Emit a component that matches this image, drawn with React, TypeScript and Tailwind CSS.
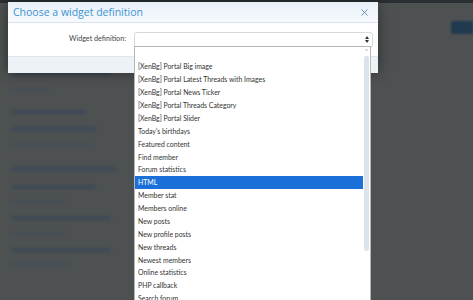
import { X } from "lucide-react";

const options = [
  "",
  "[XenBg] Portal Big image",
  "[XenBg] Portal Latest Threads with Images",
  "[XenBg] Portal News Ticker",
  "[XenBg] Portal Threads Category",
  "[XenBg] Portal Slider",
  "Today's birthdays",
  "Featured content",
  "Find member",
  "Forum statistics",
  "HTML",
  "Member stat",
  "Members online",
  "New posts",
  "New profile posts",
  "New threads",
  "Newest members",
  "Online statistics",
  "PHP callback",
  "Search forum",
];

// blurred page rows behind the overlay
const bgRows = [
  { w: "w-[100px]", mt: "mt-[8px]", bold: true },
  { w: "w-[40px]", mt: "mt-[12px]", bold: false },
  { w: "w-[75px]", mt: "mt-[18px]", bold: true },
  { w: "w-[85px]", mt: "mt-[13px]", bold: true },
  { w: "w-[80px]", mt: "mt-[12px]", bold: false },
  { w: "w-[105px]", mt: "mt-[20px]", bold: true },
  { w: "w-[85px]", mt: "mt-[14px]", bold: true },
  { w: "w-[55px]", mt: "mt-[11px]", bold: false },
  { w: "w-[100px]", mt: "mt-[12px]", bold: true },
  { w: "w-[55px]", mt: "mt-[12px]", bold: false },
  { w: "w-[100px]", mt: "mt-[12px]", bold: true },
  { w: "w-[60px]", mt: "mt-[10px]", bold: false },
];

export default function App() {
  return (
    <div
      className="relative w-[473px] h-[300px] overflow-hidden bg-[#4e5152]"
      style={{ fontFamily: '"Open Sans", "Noto Sans", sans-serif' }}
    >
      {/* page behind */}
      <div className="h-[3px] bg-[#2a2f33]" />
      <div className="flex justify-end pt-[18px]">
        <div className="w-[22px] h-[13px] bg-[#213a50] rounded-l-[2px] blur-[1px]" />
      </div>
      <div className="flex flex-col pl-[11px] pt-[30px] blur-[1.5px]">
        {bgRows.map((r, i) => (
          <div
            key={i}
            className={`${r.w} ${r.mt} h-[4px] rounded-sm ${r.bold ? "bg-[#3d4957]" : "bg-[#464e57]"}`}
          />
        ))}
      </div>

      {/* modal */}
      <div className="absolute left-[8px] top-[2px] w-[370px] shadow-[0_0_12px_rgba(0,0,0,0.45)]">
        <div className="flex items-center justify-between h-[21px] pl-[5px] pr-[8px] bg-gradient-to-b from-[#e8f0f8] to-[#f7fafd] border-b border-[#dbe4ee]">
          <span className="text-[10.5px] text-[#3c93d3] leading-none">
            Choose a widget definition
          </span>
          <X size={11} strokeWidth={2} className="text-[#5b8ab5]" />
        </div>
        <div className="flex items-center bg-white h-[33px]">
          <div className="w-[118px] text-right text-[7.2px] text-[#444] font-['Lato']">Widget definition:</div>
          <div className="ml-[8px] w-[239px] h-[16px] border border-[#d5d8dc] rounded-[3px] bg-white flex items-center justify-end pr-[3px]">
            <div className="flex flex-col gap-[1px]">
              <div className="w-0 h-0 border-l-[2px] border-r-[2px] border-b-[3px] border-l-transparent border-r-transparent border-b-[#333]" />
              <div className="w-0 h-0 border-l-[2px] border-r-[2px] border-t-[3px] border-l-transparent border-r-transparent border-t-[#333]" />
            </div>
          </div>
        </div>
        <div className="h-[17px] bg-[#edf2f7] border-t border-[#dfe6ee]" />
      </div>

      {/* open select list */}
      <div className="absolute left-[134px] top-[46px] w-[237px] h-[260px] bg-white border border-[#b5b5b5] flex font-['Lato']">
        <div className="flex-1 flex flex-col">
          {options.map((o, i) => (
            <div
              key={i}
              className={`flex items-center pl-[3px] text-[6.9px] leading-none whitespace-nowrap ${
                o === "HTML" ? "bg-[#1a6fd9] text-white" : "text-[#333]"
              } ${i === 0 ? "h-[13.5px]" : "h-[12.9px]"}`}
            >
              {o}
            </div>
          ))}
        </div>
        <div className="w-[7px] flex flex-col items-center pt-[1px]">
          <div className="text-[6px] leading-none text-[#9aa3ad]">^</div>
          <div className="mt-[2px] w-[5px] h-[195px] bg-[#dce3ea] rounded-[2px]" />
        </div>
      </div>
    </div>
  );
}
